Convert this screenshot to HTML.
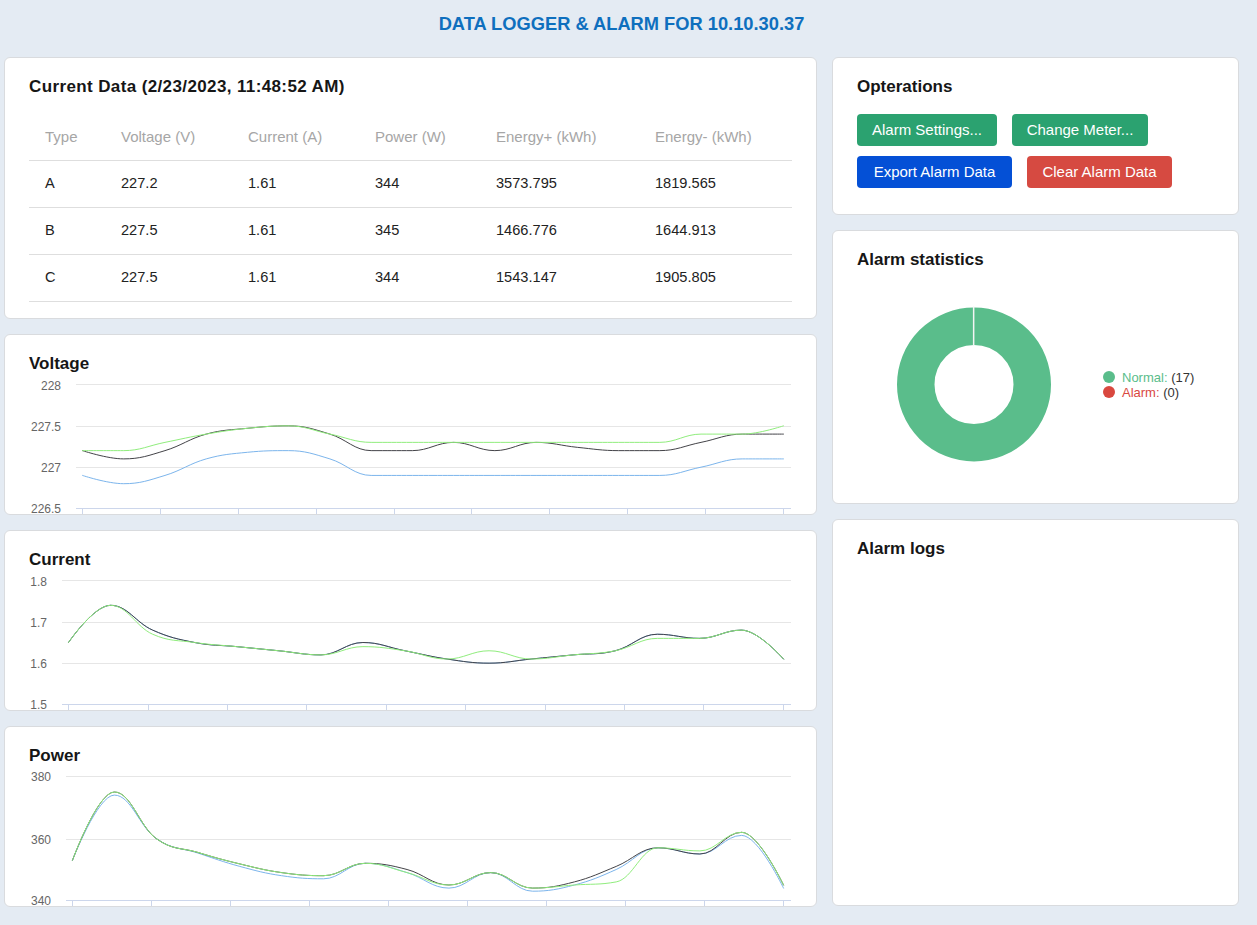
<!DOCTYPE html>
<html><head><meta charset="utf-8"><title>Data Logger</title>
<style>
html,body{margin:0;padding:0;}
body{width:1257px;height:925px;overflow:hidden;background:#e4ebf3;position:relative;font-family:"Liberation Sans",sans-serif;color:#1f1f1f;}
.card{position:absolute;box-sizing:border-box;background:#fff;border:1px solid #d9dbde;border-radius:6px;}
.t{position:absolute;white-space:nowrap;line-height:1;}
.h{font-weight:bold;font-size:17px;color:#161616;}
.th{font-size:15px;color:#a6a6a6;}
.td{font-size:14.6px;color:#222;}
.btn{position:absolute;box-sizing:border-box;border-radius:4px;color:#fff;font-size:15px;text-align:center;line-height:32px;height:32px;white-space:nowrap;}
.ax{font-size:12px;color:#666;}
svg{position:absolute;left:0;top:0;}
</style></head><body>

<div class="t" style="left:0;width:1243px;text-align:center;top:15px;font-size:18.3px;font-weight:bold;color:#0e6fbe;">DATA LOGGER &amp; ALARM FOR 10.10.30.37</div>
<div class="card" style="left:4px;top:57px;width:813px;height:262px;"></div>
<div class="card" style="left:4px;top:334px;width:813px;height:181px;"></div>
<div class="card" style="left:4px;top:530px;width:813px;height:181px;"></div>
<div class="card" style="left:4px;top:726px;width:813px;height:181px;"></div>
<div class="card" style="left:832px;top:57px;width:407px;height:158px;"></div>
<div class="card" style="left:832px;top:230px;width:407px;height:274px;"></div>
<div class="card" style="left:832px;top:519px;width:407px;height:387px;"></div>
<div class="t h" style="left:29px;top:78px;letter-spacing:0.38px;">Current Data (2/23/2023, 11:48:52 AM)</div>
<div class="t th" style="left:45px;top:129px;">Type</div>
<div class="t th" style="left:121px;top:129px;">Voltage (V)</div>
<div class="t th" style="left:248px;top:129px;">Current (A)</div>
<div class="t th" style="left:375px;top:129px;">Power (W)</div>
<div class="t th" style="left:496px;top:129px;">Energy+ (kWh)</div>
<div class="t th" style="left:655px;top:129px;">Energy- (kWh)</div>
<div class="t td" style="left:45px;top:176px;">A</div>
<div class="t td" style="left:121px;top:176px;">227.2</div>
<div class="t td" style="left:248px;top:176px;">1.61</div>
<div class="t td" style="left:375px;top:176px;">344</div>
<div class="t td" style="left:496px;top:176px;">3573.795</div>
<div class="t td" style="left:655px;top:176px;">1819.565</div>
<div class="t td" style="left:45px;top:223px;">B</div>
<div class="t td" style="left:121px;top:223px;">227.5</div>
<div class="t td" style="left:248px;top:223px;">1.61</div>
<div class="t td" style="left:375px;top:223px;">345</div>
<div class="t td" style="left:496px;top:223px;">1466.776</div>
<div class="t td" style="left:655px;top:223px;">1644.913</div>
<div class="t td" style="left:45px;top:270px;">C</div>
<div class="t td" style="left:121px;top:270px;">227.5</div>
<div class="t td" style="left:248px;top:270px;">1.61</div>
<div class="t td" style="left:375px;top:270px;">344</div>
<div class="t td" style="left:496px;top:270px;">1543.147</div>
<div class="t td" style="left:655px;top:270px;">1905.805</div>
<div class="t h" style="left:29px;top:355px;">Voltage</div>
<div class="t h" style="left:29px;top:551px;">Current</div>
<div class="t h" style="left:29px;top:747px;">Power</div>
<div class="t h" style="left:857px;top:78px;">Opterations</div>
<div class="btn" style="left:857px;top:114px;width:140px;background:#2ba270;">Alarm Settings...</div>
<div class="btn" style="left:1012px;top:114px;width:136px;background:#2ba270;">Change Meter...</div>
<div class="btn" style="left:857px;top:156px;width:155px;background:#0450d6;">Export Alarm Data</div>
<div class="btn" style="left:1027px;top:156px;width:145px;background:#d64a41;">Clear Alarm Data</div>
<div class="t h" style="left:857px;top:251px;">Alarm statistics</div>
<div class="t h" style="left:857px;top:540px;">Alarm logs</div>
<svg width="1257" height="925" viewBox="0 0 1257 925" style="pointer-events:none">
<defs><clipPath id="cv"><rect x="5" y="335" width="811" height="179"/></clipPath><clipPath id="cc"><rect x="5" y="531" width="811" height="179"/></clipPath><clipPath id="cp"><rect x="5" y="727" width="811" height="179"/></clipPath></defs>
<rect x="29" y="160" width="763" height="1" fill="#dedede"/>
<rect x="29" y="207" width="763" height="1" fill="#dedede"/>
<rect x="29" y="254" width="763" height="1" fill="#dedede"/>
<rect x="29" y="301" width="763" height="1" fill="#dedede"/>
<g clip-path="url(#cv)">
<rect x="76" y="384" width="715" height="1" fill="#e6e6e6"/>
<rect x="76" y="426" width="715" height="1" fill="#e6e6e6"/>
<rect x="76" y="467" width="715" height="1" fill="#e6e6e6"/>
<rect x="76" y="508" width="715" height="1" fill="#ccd6eb"/>
<rect x="82" y="509" width="1" height="6" fill="#ccd6eb"/>
<rect x="160" y="509" width="1" height="6" fill="#ccd6eb"/>
<rect x="238" y="509" width="1" height="6" fill="#ccd6eb"/>
<rect x="316" y="509" width="1" height="6" fill="#ccd6eb"/>
<rect x="394" y="509" width="1" height="6" fill="#ccd6eb"/>
<rect x="471" y="509" width="1" height="6" fill="#ccd6eb"/>
<rect x="549" y="509" width="1" height="6" fill="#ccd6eb"/>
<rect x="627" y="509" width="1" height="6" fill="#ccd6eb"/>
<rect x="705" y="509" width="1" height="6" fill="#ccd6eb"/>
<rect x="783" y="509" width="1" height="6" fill="#ccd6eb"/>
<path d="M82.50 475.43 C82.50 475.43 107.24 483.70 123.74 483.70 C140.23 483.70 148.48 480.39 164.97 475.43 C181.46 470.47 189.71 463.53 206.21 458.90 C222.70 454.27 230.95 453.94 247.44 452.29 C263.94 450.63 272.18 450.63 288.68 450.63 C305.17 450.63 313.42 453.94 329.91 458.90 C346.41 463.86 354.65 475.43 371.15 475.43 C387.64 475.43 395.89 475.43 412.38 475.43 C428.88 475.43 437.12 475.43 453.62 475.43 C470.11 475.43 478.36 475.43 494.85 475.43 C511.35 475.43 519.59 475.43 536.09 475.43 C552.58 475.43 560.83 475.43 577.32 475.43 C593.82 475.43 602.06 475.43 618.56 475.43 C635.05 475.43 643.30 475.43 659.79 475.43 C676.29 475.43 684.54 470.47 701.03 467.17 C717.52 463.86 725.77 458.90 742.26 458.90 C758.76 458.90 783.50 458.90 783.50 458.90" fill="none" stroke="#7cb5ec" stroke-width="1" stroke-linejoin="round" stroke-linecap="round"/>
<path d="M82.50 450.63 C82.50 450.63 107.24 458.90 123.74 458.90 C140.23 458.90 148.48 455.59 164.97 450.63 C181.46 445.67 189.71 438.56 206.21 434.10 C222.70 429.64 230.95 429.97 247.44 428.31 C263.94 426.66 272.18 425.83 288.68 425.83 C305.17 425.83 313.42 429.14 329.91 434.10 C346.41 439.06 354.65 450.63 371.15 450.63 C387.64 450.63 395.89 450.63 412.38 450.63 C428.88 450.63 437.12 442.37 453.62 442.37 C470.11 442.37 478.36 450.63 494.85 450.63 C511.35 450.63 519.59 442.37 536.09 442.37 C552.58 442.37 560.83 445.67 577.32 447.33 C593.82 448.98 602.06 450.63 618.56 450.63 C635.05 450.63 643.30 450.63 659.79 450.63 C676.29 450.63 684.54 445.67 701.03 442.37 C717.52 439.06 725.77 434.10 742.26 434.10 C758.76 434.10 783.50 434.10 783.50 434.10" fill="none" stroke="#434348" stroke-width="1" stroke-linejoin="round" stroke-linecap="round"/>
<path d="M82.50 450.63 C82.50 450.63 107.24 450.63 123.74 450.63 C140.23 450.63 148.48 445.67 164.97 442.37 C181.46 439.06 189.71 436.91 206.21 434.10 C222.70 431.29 230.95 429.97 247.44 428.31 C263.94 426.66 272.18 425.83 288.68 425.83 C305.17 425.83 313.42 430.79 329.91 434.10 C346.41 437.41 354.65 442.37 371.15 442.37 C387.64 442.37 395.89 442.37 412.38 442.37 C428.88 442.37 437.12 442.37 453.62 442.37 C470.11 442.37 478.36 442.37 494.85 442.37 C511.35 442.37 519.59 442.37 536.09 442.37 C552.58 442.37 560.83 442.37 577.32 442.37 C593.82 442.37 602.06 442.37 618.56 442.37 C635.05 442.37 643.30 442.37 659.79 442.37 C676.29 442.37 684.54 434.10 701.03 434.10 C717.52 434.10 725.77 434.10 742.26 434.10 C758.76 434.10 783.50 425.83 783.50 425.83" fill="none" stroke="#90ed7d" stroke-width="1" stroke-linejoin="round" stroke-linecap="round"/>
</g>
<g clip-path="url(#cc)">
<rect x="62" y="580" width="729" height="1" fill="#e6e6e6"/>
<rect x="62" y="622" width="729" height="1" fill="#e6e6e6"/>
<rect x="62" y="663" width="729" height="1" fill="#e6e6e6"/>
<rect x="62" y="704" width="729" height="1" fill="#ccd6eb"/>
<rect x="68" y="705" width="1" height="6" fill="#ccd6eb"/>
<rect x="148" y="705" width="1" height="6" fill="#ccd6eb"/>
<rect x="227" y="705" width="1" height="6" fill="#ccd6eb"/>
<rect x="306" y="705" width="1" height="6" fill="#ccd6eb"/>
<rect x="386" y="705" width="1" height="6" fill="#ccd6eb"/>
<rect x="465" y="705" width="1" height="6" fill="#ccd6eb"/>
<rect x="545" y="705" width="1" height="6" fill="#ccd6eb"/>
<rect x="624" y="705" width="1" height="6" fill="#ccd6eb"/>
<rect x="703" y="705" width="1" height="6" fill="#ccd6eb"/>
<rect x="783" y="705" width="1" height="6" fill="#ccd6eb"/>
<path d="M68.50 642.50 C68.50 642.50 93.74 605.30 110.56 605.30 C127.38 605.30 135.79 622.66 152.62 630.10 C169.44 637.54 177.85 639.19 194.68 642.50 C211.50 645.81 219.91 644.98 236.74 646.63 C253.56 648.29 261.97 649.11 278.79 650.77 C295.62 652.42 304.03 654.90 320.85 654.90 C337.68 654.90 346.09 642.50 362.91 642.50 C379.74 642.50 388.15 647.46 404.97 650.77 C421.79 654.07 430.21 656.55 447.03 659.03 C463.85 661.51 472.26 663.17 489.09 663.17 C505.91 663.17 514.32 660.69 531.15 659.03 C547.97 657.38 556.38 656.55 573.21 654.90 C590.03 653.25 598.44 654.90 615.26 650.77 C632.09 646.63 640.50 634.23 657.32 634.23 C674.15 634.23 682.56 638.37 699.38 638.37 C716.21 638.37 724.62 630.10 741.44 630.10 C758.26 630.10 783.50 659.03 783.50 659.03" fill="none" stroke="#7cb5ec" stroke-width="1" stroke-linejoin="round" stroke-linecap="round"/>
<path d="M68.50 642.50 C68.50 642.50 93.74 605.30 110.56 605.30 C127.38 605.30 135.79 622.66 152.62 630.10 C169.44 637.54 177.85 639.19 194.68 642.50 C211.50 645.81 219.91 644.98 236.74 646.63 C253.56 648.29 261.97 649.11 278.79 650.77 C295.62 652.42 304.03 654.90 320.85 654.90 C337.68 654.90 346.09 642.50 362.91 642.50 C379.74 642.50 388.15 647.46 404.97 650.77 C421.79 654.07 430.21 656.55 447.03 659.03 C463.85 661.51 472.26 663.17 489.09 663.17 C505.91 663.17 514.32 660.69 531.15 659.03 C547.97 657.38 556.38 656.55 573.21 654.90 C590.03 653.25 598.44 654.90 615.26 650.77 C632.09 646.63 640.50 634.23 657.32 634.23 C674.15 634.23 682.56 638.37 699.38 638.37 C716.21 638.37 724.62 630.10 741.44 630.10 C758.26 630.10 783.50 659.03 783.50 659.03" fill="none" stroke="#434348" stroke-width="1" stroke-linejoin="round" stroke-linecap="round"/>
<path d="M68.50 642.50 C68.50 642.50 93.74 605.30 110.56 605.30 C127.38 605.30 135.79 626.79 152.62 634.23 C169.44 641.67 177.85 640.02 194.68 642.50 C211.50 644.98 219.91 644.98 236.74 646.63 C253.56 648.29 261.97 649.11 278.79 650.77 C295.62 652.42 304.03 654.90 320.85 654.90 C337.68 654.90 346.09 646.63 362.91 646.63 C379.74 646.63 388.15 648.29 404.97 650.77 C421.79 653.25 430.21 659.03 447.03 659.03 C463.85 659.03 472.26 650.77 489.09 650.77 C505.91 650.77 514.32 659.03 531.15 659.03 C547.97 659.03 556.38 656.55 573.21 654.90 C590.03 653.25 598.44 654.07 615.26 650.77 C632.09 647.46 640.50 638.37 657.32 638.37 C674.15 638.37 682.56 638.37 699.38 638.37 C716.21 638.37 724.62 630.10 741.44 630.10 C758.26 630.10 783.50 659.03 783.50 659.03" fill="none" stroke="#90ed7d" stroke-width="1" stroke-linejoin="round" stroke-linecap="round"/>
</g>
<g clip-path="url(#cp)">
<rect x="66" y="776" width="725" height="1" fill="#e6e6e6"/>
<rect x="66" y="839" width="725" height="1" fill="#e6e6e6"/>
<rect x="66" y="900" width="725" height="1" fill="#ccd6eb"/>
<rect x="72" y="901" width="1" height="6" fill="#ccd6eb"/>
<rect x="151" y="901" width="1" height="6" fill="#ccd6eb"/>
<rect x="230" y="901" width="1" height="6" fill="#ccd6eb"/>
<rect x="309" y="901" width="1" height="6" fill="#ccd6eb"/>
<rect x="388" y="901" width="1" height="6" fill="#ccd6eb"/>
<rect x="467" y="901" width="1" height="6" fill="#ccd6eb"/>
<rect x="546" y="901" width="1" height="6" fill="#ccd6eb"/>
<rect x="625" y="901" width="1" height="6" fill="#ccd6eb"/>
<rect x="704" y="901" width="1" height="6" fill="#ccd6eb"/>
<rect x="783" y="901" width="1" height="6" fill="#ccd6eb"/>
<path d="M72.50 860.20 C72.50 860.20 97.59 795.10 114.32 795.10 C131.05 795.10 139.42 826.91 156.15 838.50 C172.88 850.09 181.24 847.49 197.97 853.07 C214.70 858.65 223.06 861.87 239.79 866.40 C256.52 870.93 264.89 873.22 281.62 875.70 C298.35 878.18 306.71 878.80 323.44 878.80 C340.17 878.80 348.54 863.30 365.26 863.30 C381.99 863.30 390.36 867.64 407.09 872.60 C423.82 877.56 432.18 888.10 448.91 888.10 C465.64 888.10 474.01 872.60 490.74 872.60 C507.46 872.60 515.83 891.20 532.56 891.20 C549.29 891.20 557.65 889.34 574.38 885.00 C591.11 880.66 599.48 876.94 616.21 869.50 C632.94 862.06 641.30 847.80 658.03 847.80 C674.76 847.80 683.12 854.00 699.85 854.00 C716.58 854.00 724.95 835.40 741.68 835.40 C758.41 835.40 783.50 888.10 783.50 888.10" fill="none" stroke="#7cb5ec" stroke-width="1" stroke-linejoin="round" stroke-linecap="round"/>
<path d="M72.50 860.20 C72.50 860.20 97.59 792.00 114.32 792.00 C131.05 792.00 139.42 826.41 156.15 838.50 C172.88 850.59 181.24 847.37 197.97 852.45 C214.70 857.53 223.06 859.89 239.79 863.92 C256.52 867.95 264.89 870.24 281.62 872.60 C298.35 874.96 306.71 875.70 323.44 875.70 C340.17 875.70 348.54 863.30 365.26 863.30 C381.99 863.30 390.36 865.16 407.09 869.50 C423.82 873.84 432.18 885.00 448.91 885.00 C465.64 885.00 474.01 872.60 490.74 872.60 C507.46 872.60 515.83 888.10 532.56 888.10 C549.29 888.10 557.65 886.24 574.38 881.90 C591.11 877.56 599.48 873.22 616.21 866.40 C632.94 859.58 641.30 847.80 658.03 847.80 C674.76 847.80 683.12 854.00 699.85 854.00 C716.58 854.00 724.95 832.30 741.68 832.30 C758.41 832.30 783.50 885.00 783.50 885.00" fill="none" stroke="#434348" stroke-width="1" stroke-linejoin="round" stroke-linecap="round"/>
<path d="M72.50 860.20 C72.50 860.20 97.59 792.00 114.32 792.00 C131.05 792.00 139.42 826.41 156.15 838.50 C172.88 850.59 181.24 847.37 197.97 852.45 C214.70 857.53 223.06 859.89 239.79 863.92 C256.52 867.95 264.89 870.24 281.62 872.60 C298.35 874.96 306.71 875.70 323.44 875.70 C340.17 875.70 348.54 863.30 365.26 863.30 C381.99 863.30 390.36 868.26 407.09 872.60 C423.82 876.94 432.18 885.00 448.91 885.00 C465.64 885.00 474.01 872.60 490.74 872.60 C507.46 872.60 515.83 888.10 532.56 888.10 C549.29 888.10 557.65 886.24 574.38 885.00 C591.11 883.76 599.48 885.00 616.21 881.90 C632.94 878.80 641.30 847.80 658.03 847.80 C674.76 847.80 683.12 850.90 699.85 850.90 C716.58 850.90 724.95 832.30 741.68 832.30 C758.41 832.30 783.50 885.00 783.50 885.00" fill="none" stroke="#90ed7d" stroke-width="1" stroke-linejoin="round" stroke-linecap="round"/>
</g>
<circle cx="974" cy="384.5" r="58.25" fill="none" stroke="#5abd8b" stroke-width="37.5"/>
<rect x="972.9" y="306.5" width="1.5" height="39.0" fill="#f4f4f4"/>
<circle cx="1109" cy="377" r="6" fill="#5abd8b"/><circle cx="1109" cy="392" r="6" fill="#d9483f"/>
</svg>
<div class="t ax" style="left:1px;width:60px;text-align:right;top:380px;">228</div>
<div class="t ax" style="left:1px;width:60px;text-align:right;top:421px;">227.5</div>
<div class="t ax" style="left:1px;width:60px;text-align:right;top:462px;">227</div>
<div class="t ax" style="left:1px;width:60px;text-align:right;top:503px;">226.5</div>
<div class="t ax" style="left:-13px;width:60px;text-align:right;top:576px;">1.8</div>
<div class="t ax" style="left:-13px;width:60px;text-align:right;top:617px;">1.7</div>
<div class="t ax" style="left:-13px;width:60px;text-align:right;top:658px;">1.6</div>
<div class="t ax" style="left:-13px;width:60px;text-align:right;top:699px;">1.5</div>
<div class="t ax" style="left:-9px;width:60px;text-align:right;top:771px;">380</div>
<div class="t ax" style="left:-9px;width:60px;text-align:right;top:834px;">360</div>
<div class="t ax" style="left:-9px;width:60px;text-align:right;top:895px;">340</div>
<div class="t" style="left:1122px;top:371px;font-size:13px;"><span style="color:#5abd8b">Normal:</span> <span style="color:#333">(17)</span></div>
<div class="t" style="left:1122px;top:386px;font-size:13px;"><span style="color:#d9483f">Alarm:</span> <span style="color:#333">(0)</span></div>
</body></html>
